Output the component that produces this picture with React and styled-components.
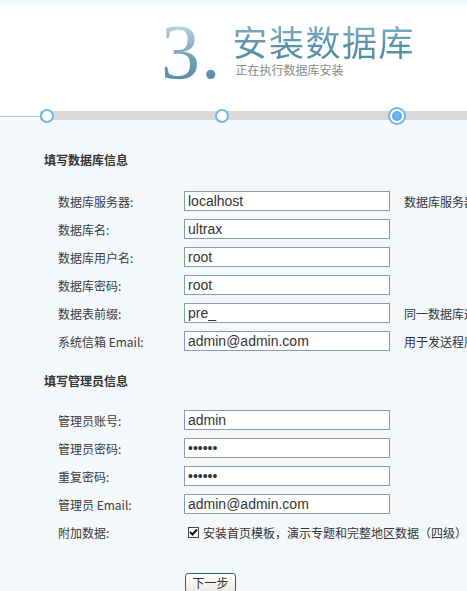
import styled, { createGlobalStyle } from "styled-components";

const GlobalStyle = createGlobalStyle`
  html, body {
    margin: 0;
    padding: 0;
    background: #f4f8fb;
    overflow: hidden;
  }
  #root {
    width: 467px;
    height: 591px;
    overflow: hidden;
  }
`;

const dbRows = [
  { label: "数据库服务器:", value: "localhost", hint: "数据库服务器地址, 一般为 localhost" },
  { label: "数据库名:", value: "ultrax" },
  { label: "数据库用户名:", value: "root" },
  { label: "数据库密码:", value: "root" },
  { label: "数据表前缀:", value: "pre_", hint: "同一数据库运行多个论坛时，请修改前缀" },
  { label: "系统信箱 Email:", value: "admin@admin.com", hint: "用于发送程序错误报告" },
];

const adminRows = [
  { label: "管理员账号:", value: "admin" },
  { label: "管理员密码:", value: "123456", type: "password" },
  { label: "重复密码:", value: "123456", type: "password" },
  { label: "管理员 Email:", value: "admin@admin.com" },
];

export default function App() {
  return (
    <>
      <GlobalStyle />
      <Page>
        <Header>
          <TopStrip />
          <TitleBlock>
            <StepNum>3.</StepNum>
            <TitleText>
              <Title>安装数据库</Title>
              <SubTitle>正在执行数据库安装</SubTitle>
            </TitleText>
          </TitleBlock>
        </Header>

        <Track>
          <Lead />
          <Rail>
            <Dot />
            <Dot />
            <Dot $current>
              <DotCore />
            </Dot>
          </Rail>
        </Track>

        <Form>
          <Heading>填写数据库信息</Heading>
          <Rows>
            {dbRows.map((r) => (
              <Row key={r.label}>
                <Label>{r.label}</Label>
                <Field type={r.type || "text"} value={r.value} readOnly />
                {r.hint && <Hint>{r.hint}</Hint>}
              </Row>
            ))}
          </Rows>

          <Heading $second>填写管理员信息</Heading>
          <Rows>
            {adminRows.map((r) => (
              <Row key={r.label}>
                <Label>{r.label}</Label>
                <Field type={r.type || "text"} value={r.value} readOnly />
              </Row>
            ))}
            <Row>
              <Label>附加数据:</Label>
              <CheckLine>
                <Check>
                  <svg width="9" height="9" viewBox="0 0 9 9">
                    <path d="M1 4 L3.5 6.5 L8 1.5" fill="none" stroke="#111" strokeWidth="2" />
                  </svg>
                </Check>
                安装首页模板，演示专题和完整地区数据（四级）
              </CheckLine>
            </Row>
          </Rows>

          <Actions>
            <Button>下一步</Button>
          </Actions>
        </Form>
      </Page>
    </>
  );
}

const Page = styled.div`
  display: flex;
  flex-direction: column;
  font-family: "Noto Sans CJK SC", "Liberation Sans", sans-serif;
  font-size: 12px;
  color: #333;
`;

const Header = styled.div`
  height: 106px;
  background: #fff;
  display: flex;
  flex-direction: column;
`;

const TopStrip = styled.div`
  height: 7px;
  background: linear-gradient(#eef5fb, #fff);
`;

const TitleBlock = styled.div`
  display: flex;
  align-items: flex-start;
  padding-left: 161px;
`;

const StepNum = styled.div`
  font-family: "Liberation Serif", "Times New Roman", serif;
  font-size: 78px;
  line-height: 78px;
  margin-top: 6px;
  letter-spacing: 1px;
  background: linear-gradient(#c3dae5 10%, #6d9db4 60%, #4e839d);
  -webkit-background-clip: text;
  background-clip: text;
  color: transparent;
`;

const TitleText = styled.div`
  display: flex;
  flex-direction: column;
  margin-left: 11px;
  padding-top: 12px;
`;

const Title = styled.div`
  font-size: 35px;
  line-height: 43px;
  letter-spacing: 1.5px;
  background: linear-gradient(#8bbacd, #5a93ab 60%, #4c8aa4);
  -webkit-background-clip: text;
  background-clip: text;
  color: transparent;
`;

const SubTitle = styled.div`
  margin-top: 1px;
  margin-left: 3px;
  font-size: 12px;
  line-height: 14px;
  color: #8a8a8a;
`;

const Track = styled.div`
  height: 20px;
  display: flex;
  align-items: center;
  background: linear-gradient(#fff 0 14px, #f4f8fb 14px);
`;

const Lead = styled.div`
  width: 40px;
  height: 1px;
  background: #a9cde6;
`;

const Rail = styled.div`
  flex: 1;
  height: 20px;
  position: relative;
  display: flex;
  align-items: center;
  gap: 161px;

  &::before {
    content: "";
    position: absolute;
    left: 0;
    right: 0;
    top: 5px;
    height: 9px;
    background: #dadada;
  }
`;

const Dot = styled.div`
  position: relative;
  box-sizing: border-box;
  width: ${(p) => (p.$current ? "18px" : "14px")};
  height: ${(p) => (p.$current ? "18px" : "14px")};
  margin-left: ${(p) => (p.$current ? "-2px" : "0")};
  border-radius: 50%;
  border: 2px solid #6fb6ea;
  background: #fff;
  display: flex;
  align-items: center;
  justify-content: center;
`;

const DotCore = styled.div`
  width: 10px;
  height: 10px;
  border-radius: 50%;
  background: radial-gradient(circle at 50% 45%, #7cbcef, #4c9ee3);
`;

const Form = styled.div`
  display: flex;
  flex-direction: column;
  padding-left: 44px;
  padding-top: 24px;
`;

const Heading = styled.div`
  font-weight: bold;
  font-size: 12px;
  line-height: 20px;
  color: #333;
  margin-top: ${(p) => (p.$second ? "16px" : "0")};
  margin-bottom: ${(p) => (p.$second ? "15px" : "17px")};
`;

const Rows = styled.div`
  display: flex;
  flex-direction: column;
  padding-left: 14px;
`;

const Row = styled.div`
  height: 28px;
  display: grid;
  grid-template-columns: 126px 206px max-content;
  align-items: center;
  white-space: nowrap;
`;

const Label = styled.span`
  color: #3a3a3a;
`;

const Field = styled.input`
  box-sizing: border-box;
  width: 206px;
  height: 20px;
  margin: 0;
  padding: 0 3px;
  border: 1px solid #7f9db9;
  background: #fff;
  font-family: "Liberation Sans", Arial, sans-serif;
  font-size: 14px;
  color: #333;
  outline: none;
`;

const Hint = styled.span`
  margin-left: 14px;
  color: #333;
`;

const CheckLine = styled.span`
  display: flex;
  align-items: center;
  gap: 4px;
  padding-left: 4px;
  white-space: nowrap;
`;

const Check = styled.span`
  box-sizing: border-box;
  width: 11px;
  height: 11px;
  border: 1px solid #444;
  background: #fff;
  display: flex;
  align-items: center;
  justify-content: center;
`;

const Actions = styled.div`
  padding-left: 141px;
  padding-top: 27px;
`;

const Button = styled.button`
  width: 51px;
  height: 20px;
  padding: 0;
  border: 1px solid #2a5c9c;
  border-radius: 3px;
  background: linear-gradient(#ffffff, #ece9e0);
  font-family: "Noto Sans CJK SC", sans-serif;
  font-size: 12px;
  line-height: 16px;
  color: #333;
`;
